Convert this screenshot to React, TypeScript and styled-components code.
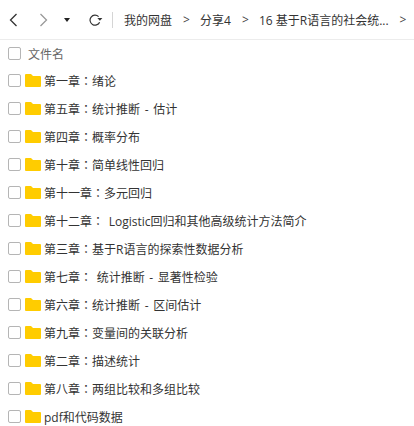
import styled, { createGlobalStyle } from 'styled-components'

const GlobalStyle = createGlobalStyle`
  html, body {
    margin: 0;
    padding: 0;
    background: #fff;
    overflow: hidden;
  }
  body {
    font-family: "Open Sans", "Noto Sans CJK SC", sans-serif;
  }
`

const Page = styled.div`
  width: 414px;
  height: 426px;
  overflow: hidden;
`

const Toolbar = styled.div`
  display: flex;
  align-items: center;
  height: 39px;
  border-bottom: 1px solid #ececec;
`

const NavButton = styled.span<{ $width: number; $left?: number }>`
  display: flex;
  align-items: center;
  justify-content: center;
  width: ${(p) => p.$width}px;
  margin-left: ${(p) => p.$left ?? 0}px;
  height: 100%;
`

const Divider = styled.span`
  width: 1px;
  height: 16px;
  margin: 0 11px 0 5px;
  background: #d5d5d5;
`

const Crumbs = styled.div`
  display: flex;
  align-items: center;
  gap: 11px;
  font-size: 12px;
  color: #333;
  white-space: nowrap;
`

const Arrow = styled.span`
  width: 6px;
  font-size: 12px;
  color: #444;
`

const HeaderRow = styled.div`
  display: flex;
  align-items: center;
  height: 26px;
  padding-left: 8px;
  font-size: 12px;
  color: #666;
`

const HeaderLabel = styled.span`
  margin-left: 7px;
  padding-top: 2px;
`

const List = styled.div`
  display: flex;
  flex-direction: column;
`

const Row = styled.div`
  display: flex;
  align-items: center;
  height: 28px;
  padding-left: 8px;
  font-size: 12px;
  word-spacing: 1.5px;
  color: #333;
  white-space: pre;
`

const Label = styled.span`
  padding-top: 2px;
`

// the fullwidth colon sits mid-height in the reference, which is how the TC font draws it
const Colon = styled.span`
  font-family: "Noto Sans CJK TC", sans-serif;
`

const Check = styled.span`
  box-sizing: border-box;
  flex: none;
  width: 13px;
  height: 13px;
  border: 1px solid #b5b5b5;
  border-radius: 2px;
  background: #fff;
`

const FolderIcon = styled.svg`
  flex: none;
  margin: 0 3px 0 4px;
`

const files = [
  '第一章：绪论',
  '第五章：统计推断 - 估计',
  '第四章：概率分布',
  '第十章：简单线性回归',
  '第十一章：多元回归',
  '第十二章： Logistic回归和其他高级统计方法简介',
  '第三章：基于R语言的探索性数据分析',
  '第七章： 统计推断 - 显著性检验',
  '第六章：统计推断 - 区间估计',
  '第九章：变量间的关联分析',
  '第二章：描述统计',
  '第八章：两组比较和多组比较',
  'pdf和代码数据',
]

const Folder = () => (
  <FolderIcon width="16" height="13" viewBox="0 0 16 13">
    <path d="M0 1a1 1 0 0 1 1-1h5l2 2h7a1 1 0 0 1 1 1v9a1 1 0 0 1-1 1H1a1 1 0 0 1-1-1z" fill="#ffcc00" />
  </FolderIcon>
)

const FileName = ({ name }: { name: string }) => {
  const [chapter, ...rest] = name.split('：')
  if (rest.length === 0) {
    return <Label>{name}</Label>
  }
  return (
    <Label>
      {chapter}
      <Colon>：</Colon>
      {rest.join('：')}
    </Label>
  )
}

const App = () => (
  <Page>
    <GlobalStyle />
    <Toolbar>
      <NavButton $width={27}>
        <svg width="9" height="14" viewBox="0 0 9 14">
          <path d="M7.5 1 1.5 7l6 6" fill="none" stroke="#333" strokeWidth="1.3" />
        </svg>
      </NavButton>
      <NavButton $width={27} $left={3}>
        <svg width="9" height="14" viewBox="0 0 9 14">
          <path d="M1.5 1l6 6-6 6" fill="none" stroke="#999" strokeWidth="1.3" />
        </svg>
      </NavButton>
      <NavButton $width={20}>
        <svg width="6" height="4" viewBox="0 0 6 4">
          <path d="M0 0h6L3 4z" fill="#222" />
        </svg>
      </NavButton>
      <NavButton $width={22} $left={8}>
        <svg width="14" height="12" viewBox="0 0 14 12">
          <path d="M10.6 8.2A5 5 0 1 1 9.6 2.6" fill="none" stroke="#333" strokeWidth="1.2" />
          <path d="M8.4 4h5l-2.5 2.8z" fill="#333" />
        </svg>
      </NavButton>
      <Divider />
      <Crumbs>
        <span>我的网盘</span>
        <Arrow>&gt;</Arrow>
        <span>分享4</span>
        <Arrow>&gt;</Arrow>
        <span>16 基于R语言的社会统...</span>
        <Arrow>&gt;</Arrow>
      </Crumbs>
    </Toolbar>
    <HeaderRow>
      <Check />
      <HeaderLabel>文件名</HeaderLabel>
    </HeaderRow>
    <List>
      {files.map((name) => (
        <Row key={name}>
          <Check />
          <Folder />
          <FileName name={name} />
        </Row>
      ))}
    </List>
  </Page>
)

export default App
